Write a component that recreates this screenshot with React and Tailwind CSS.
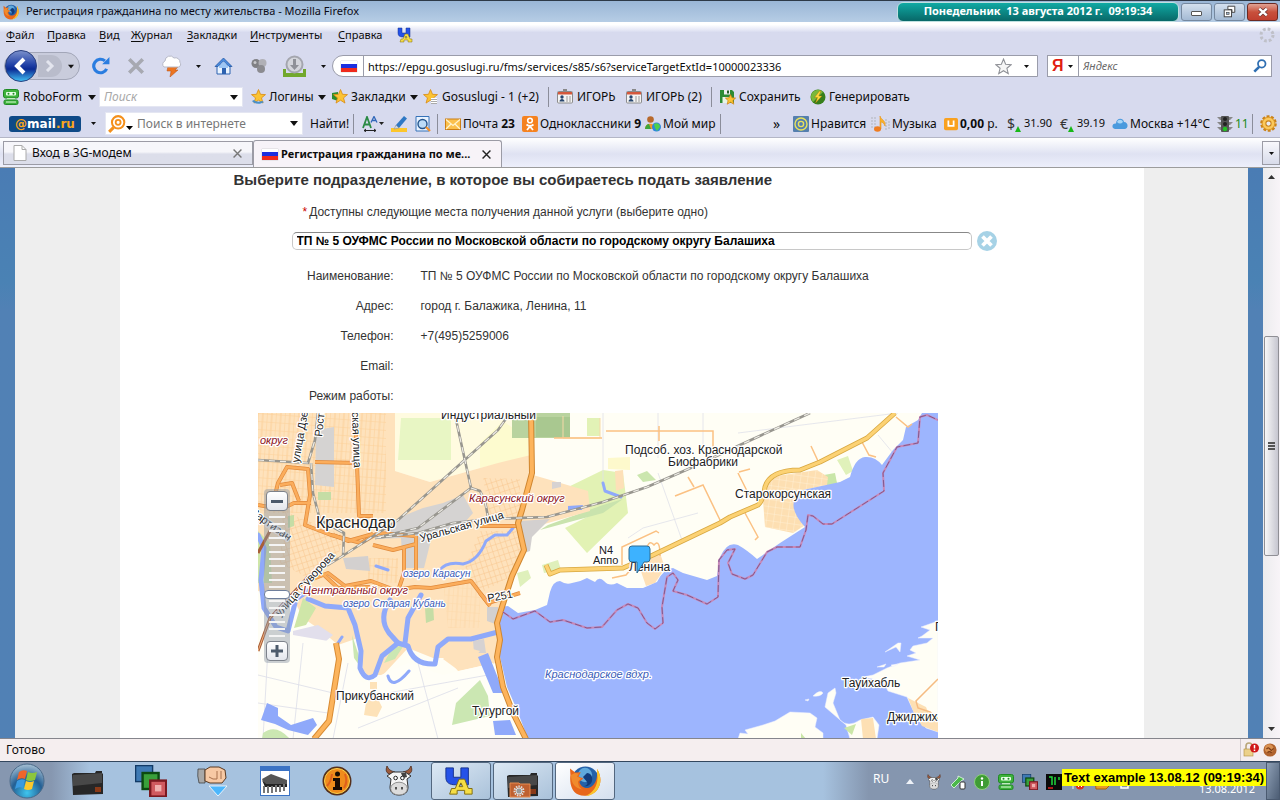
import React, { useState } from 'react';

const menuItems = [
  { key: 'Ф', rest: 'айл', width: 'w-[41px]' },
  { key: 'П', rest: 'равка', width: 'w-[52px]' },
  { key: 'В', rest: 'ид', width: 'w-8' },
  { key: 'Ж', rest: 'урнал', width: 'w-14' },
  { key: 'З', rest: 'акладки', width: 'w-[63px]' },
  { key: 'И', rest: 'нструменты', width: 'w-[88px]' },
  { key: 'С', rest: 'правка', width: 'w-[59px]' },
];

const details = [
  { label: 'Наименование:', value: 'ТП № 5 ОУФМС России по Московской области по городскому округу Балашиха' },
  { label: 'Адрес:', value: 'город г. Балажика, Ленина, 11' },
  { label: 'Телефон:', value: '+7(495)5259006' },
  { label: 'Email:', value: '' },
  { label: 'Режим работы:', value: '' },
];

function Svg({ size = 16, className = '', children }) {
  return (
    <svg width={size} height={size} viewBox="0 0 16 16" className={`shrink-0 ${className}`} aria-hidden="true">
      {children}
    </svg>
  );
}

function Caret({ className = '' }) {
  return (
    <svg width="8" height="5" viewBox="0 0 8 5" className={`shrink-0 ${className}`} aria-hidden="true">
      <path d="M0 0h8L4 5z" fill="#111" />
    </svg>
  );
}

function SmallCaret() {
  return (
    <svg width="5" height="3" viewBox="0 0 5 3" className="shrink-0" aria-hidden="true">
      <path d="M0 0h5L2.5 3z" fill="#111" />
    </svg>
  );
}

function FirefoxIcon({ size = 16 }) {
  return (
    <Svg size={size}>
      <circle cx="8.2" cy="7.6" r="6.8" fill="#2561a8" />
      <circle cx="8" cy="5" r="3.6" fill="#5fa9dc" />
      <path d="M9 4c2 0 3 2 2.500 4S9 11 7 10.500c2 0 2.500-1 2-2S7.500 7 7 6z" fill="#123c7c" />
      <path d="M14 2c2 3 2.400 7 .4 10S8 16.300 4.600 14.800.2 9 .7 5L.5 1.800l2.600 2 2.800-.2-1.200 2.200 2.500 1-2 1.600c.4 2 2.400 3.600 4.800 3 3-.8 4.500-4.500 4-9.400z" fill="#e8671b" />
      <path d="M14 2c2 3 2.400 7 .4 10-1.400 2.200-3.600 3.400-6 3.500 4.200-1.800 6.600-6 5.600-11.500z" fill="#fbc52d" />
      <path d="M1 5l2-1 2 .2-1 1.500 2 1-1.500 1.500c0 2 1 3.500 2.500 4C3 12 1 9 1 5z" fill="#f08b2c" />
    </Svg>
  );
}

function LetterLogo({ size = 16 }) {
  return (
    <Svg size={size}>
      <path d="M1 1h4v5h4V1h4v9H6C3 10 1 9 1 6z" fill="#2552e8" stroke="#15308c" strokeWidth=".5" />
      <path d="M8 7h3l2 5h2v3h-4v-2H7v2H3l1-3h2zm1 2l-1 2h2z" fill="#f6de45" stroke="#7d6a10" strokeWidth=".5" />
    </Svg>
  );
}

function RuFlag() {
  return (
    <span className="flex h-[11px] w-4 shrink-0 flex-col shadow-[0_0_1px_#999]">
      <span className="flex-1 bg-white" />
      <span className="flex-1 bg-[#1a2fe0]" />
      <span className="flex-1 bg-[#ee2a1c]" />
    </span>
  );
}

function RoboIcon({ size = 16 }) {
  return (
    <Svg size={size}>
      <rect x=".5" y=".5" width="15" height="8.5" rx="2" fill="#3fb23c" stroke="#1f8a24" />
      <rect x="3" y="3" width="10" height="3.5" rx="1" fill="#eaffea" />
      <circle cx="5.5" cy="4.8" r="1" fill="#1f8a24" />
      <circle cx="10.5" cy="4.8" r="1" fill="#1f8a24" />
      <rect x="4" y="9" width="8" height="2" fill="#bfeabf" />
      <rect x="1" y="11" width="14" height="4.5" rx="1.5" fill="#3fb23c" stroke="#1f8a24" />
      <path d="M3 13h10" stroke="#dfffdc" />
    </Svg>
  );
}

function StarIcon({ variant }) {
  return (
    <Svg>
      {variant === 'green' && <path d="M0 4l6-1v9l-6-2z" fill="#2c8b2c" />}
      <path d="M8.500.5l2 4.800 5 .3-4 3.300 1.500 5.200-4.500-2.900-4.500 2.900 1.500-5.200-4-3.300 5-.3z" fill="#fbc334" stroke="#d98a12" strokeWidth=".8" />
      {variant === 'login' && <path d="M2 12c2 3 8 4 12 1l-2-1c-3 1-6 1-8-1z" fill="#4a90c8" />}
      {variant === 'site' && (
        <g>
          <rect x="9" y="9" width="6" height="6" fill="#fff" />
          <path d="M9.500 10.500h5M9.500 12.500h5M9.500 14.500h5" stroke="#555" strokeDasharray="1 1" />
        </g>
      )}
    </Svg>
  );
}

function CardIcon() {
  return (
    <Svg>
      <rect x="6" y="0" width="4" height="3" fill="#888" />
      <rect x=".5" y="2.5" width="15" height="11.5" rx="1" fill="#f4f4f4" stroke="#8c8c8c" />
      <rect x="1" y="3" width="14" height="2.5" fill="#d4583c" />
      <circle cx="5" cy="8" r="1.7" fill="#27466e" />
      <path d="M2.500 12.500c0-3.500 5-3.500 5 0z" fill="#27466e" />
      <path d="M9 8h5M9 10h5M9 12h5" stroke="#999" strokeDasharray="2 1" />
    </Svg>
  );
}

function SaveIcon() {
  return (
    <Svg>
      <path d="M0 1h12l2 2v11H0z" fill="#2e8b34" />
      <rect x="4" y="1" width="6" height="4.5" fill="#eee" />
      <rect x="7" y="1.5" width="2" height="3" fill="#245c28" />
      <rect x="2.5" y="8" width="7" height="6" fill="#e8f4e6" />
      <path d="M10.500 5.500l1.500 3.300 3.600.3-2.700 2.400.9 3.700-3.300-2-3.300 2 .9-3.700-2.700-2.400 3.600-.3z" fill="#fbc334" stroke="#c97d10" strokeWidth=".7" />
    </Svg>
  );
}

function GenerateIcon() {
  return (
    <Svg>
      <circle cx="8" cy="8" r="7.5" fill="#377f1c" />
      <path d="M1 8a7 7 0 0 1 12-5L3 13A7 7 0 0 1 1 8z" fill="#79b83b" />
      <path d="M9.500 2L4.500 8.500h3L5.500 14l6.500-7H8.800L11 2z" fill="#ffd93b" stroke="#a36a00" strokeWidth=".4" />
    </Svg>
  );
}

function Separator() {
  return <span className="h-5 w-px shrink-0 bg-[#8b8d9a]" />;
}

function TitleBar() {
  return (
    <header className="flex h-[22px] shrink-0 items-center border-t border-[#2d3947] bg-linear-to-b from-[#9ab6d6] to-[#b6cde5] pl-[3px] text-[#0a0a14]">
      <FirefoxIcon />
      <h1 className="ml-[7px] flex-1 truncate text-[11px]">Регистрация гражданина по месту жительства - Mozilla Firefox</h1>
      <div className="mr-0.5 flex h-5 w-[282px] shrink-0 items-center justify-center rounded-md border border-[#bfe0e0] bg-linear-to-b from-[#10aaa4] to-[#086868] text-[11px] font-bold whitespace-pre text-white">
        Понедельник  13 августа 2012 г.  09:19:34
      </div>
      <div className="mr-0.5 flex shrink-0 gap-0.5">
        <button aria-label="Свернуть" className="flex h-[18px] w-[31px] items-center justify-center rounded-[3px] border border-[#75889f] bg-linear-to-b from-[#d4e0ee] to-[#a4bad4]">
          <span className="mt-1 h-[5px] w-[11px] rounded-[1px] border border-[#555] bg-white" />
        </button>
        <button aria-label="Восстановить" className="flex h-[18px] w-[31px] items-center justify-center rounded-[3px] border border-[#75889f] bg-linear-to-b from-[#d4e0ee] to-[#a4bad4]">
          <Svg size={13}>
            <path d="M6 1.500h8.500V9H11V5.500H6z" fill="#fff" stroke="#444" strokeWidth="1.2" />
            <rect x="1.5" y="6" width="9" height="8.5" fill="#fff" stroke="#444" strokeWidth="1.2" />
            <rect x="4.5" y="9" width="3" height="2.5" fill="#9fb5cf" stroke="#444" strokeWidth=".8" />
          </Svg>
        </button>
        <button aria-label="Закрыть" className="flex h-[18px] w-[31px] items-center justify-center rounded-[3px] border border-[#6b2a22] bg-linear-to-b from-[#e0a294] via-[#c8503c] to-[#c04030]">
          <Svg size={12}>
            <path d="M3 3.500l10 9M13 3.500l-10 9" stroke="#633" strokeWidth="5" />
            <path d="M3 3.500l10 9M13 3.500l-10 9" stroke="#fff" strokeWidth="3.2" />
          </Svg>
        </button>
      </div>
    </header>
  );
}

function MenuBar() {
  return (
    <nav className="flex h-[26px] shrink-0 items-center bg-linear-to-b from-white from-10% via-[#e6e8f6] via-30% to-[#d7daee] to-40% pl-1.5 text-[11px]">
      {menuItems.map(item => (
        <button key={item.rest} className={`shrink-0 text-left ${item.width}`}>
          <u className="underline-offset-2">{item.key}</u>{item.rest}
        </button>
      ))}
      <LetterLogo />
      <svg width="16" height="16" viewBox="0 0 16 16" className="mr-[5px] ml-auto" aria-hidden="true">
        <circle cx="8" cy="8" r="6" fill="none" stroke="#bfc0c8" strokeWidth="3" strokeDasharray="2.7 2" />
      </svg>
    </nav>
  );
}

function NavBar() {
  return (
    <div className="flex h-9 shrink-0 items-center pr-2 pl-1">
      <div className="flex h-7 w-[76px] shrink-0 items-center rounded-r-2xl rounded-l-2xl border border-[#a2a6b8] bg-[#c9ccdc]">
        <button aria-label="Назад" className="-ml-px shrink-0">
          <svg width="34" height="34" viewBox="0 0 34 34">
            <defs>
              <linearGradient id="back" x1="0" y1="0" x2="0" y2="1">
                <stop offset="0" stopColor="#7d92cc" />
                <stop offset=".45" stopColor="#2343a8" />
                <stop offset=".6" stopColor="#0b2a94" />
                <stop offset="1" stopColor="#42c3f5" />
              </linearGradient>
            </defs>
            <circle cx="17" cy="17" r="15.5" fill="url(#back)" stroke="#2a4080" />
            <path d="M20 10l-7 7 7 7" fill="none" stroke="#fff" strokeWidth="4" />
          </svg>
        </button>
        <button aria-label="Вперёд" className="flex h-[22px] w-6 shrink-0 items-center justify-center rounded-r-full bg-[#b9bccb]">
          <svg width="10" height="12" viewBox="0 0 10 12">
            <path d="M2 1l5 5-5 5" fill="none" stroke="#e3e5ee" strokeWidth="3" />
          </svg>
        </button>
        <button aria-label="История" className="ml-1.5"><Caret className="w-1.5" /></button>
      </div>
      <button aria-label="Обновить" className="ml-3 shrink-0">
        <Svg size={18}>
          <path d="M13 10.500A6 6 0 1 1 11.500 3.500" fill="none" stroke="#2a7de0" strokeWidth="2.8" />
          <path d="M9 6.500h6.500V0z" fill="#2a7de0" />
        </Svg>
      </button>
      <button aria-label="Остановить" className="ml-[17px] shrink-0">
        <Svg size={18}><path d="M2 2l12 12M14 2L2 14" stroke="#a7a9b1" strokeWidth="3.2" /></Svg>
      </button>
      <button aria-label="Погода" className="ml-4 shrink-0">
        <svg width="22" height="22" viewBox="0 0 22 22">
          <path d="M7 11h11l-4 4h3l-8 7 1-6H6z" fill="#ec7420" stroke="#b95110" strokeWidth=".5" />
          <path d="M3 12a3.500 3.500 0 0 1 1-6 5 5 0 0 1 9-3 4.500 4.500 0 0 1 6 4.500A3 3 0 0 1 18 12z" fill="#fff" stroke="#b8bac8" />
        </svg>
      </button>
      <span className="flex w-[31px] shrink-0 justify-center"><SmallCaret /></span>
      <button aria-label="Домой" className="shrink-0">
        <svg width="19" height="18" viewBox="0 0 19 18">
          <path d="M3 8h13v9H3z" fill="#eaf4ff" stroke="#2d62b0" />
          <path d="M9.500 1L1 9.500h3l5.500-5.500 5.500 5.500h3z" fill="#4a8de0" stroke="#2457a5" strokeWidth=".8" />
          <path d="M5 9l4.500-4.500L14 9v2H5z" fill="#9cc6f4" />
          <rect x="8" y="11" width="4" height="6" fill="#2d62b0" />
        </svg>
      </button>
      <button aria-label="Дополнения" className="ml-[18px] shrink-0">
        <Svg>
          <circle cx="5" cy="5.5" r="4.5" fill="#808084" />
          <circle cx="11.5" cy="5" r="4" fill="#b0b0b6" />
          <circle cx="10" cy="11" r="4" fill="#8b8b90" />
          <circle cx="4" cy="4.5" r="1.5" fill="#c8c8cc" />
        </Svg>
      </button>
      <button aria-label="Загрузки" className="ml-4 shrink-0">
        <svg width="23" height="23" viewBox="0 0 23 23">
          <path d="M0 14h23v8H0z" fill="#71a82c" />
          <path d="M3 13h17v5H3z" fill="#d7daee" />
          <circle cx="11.5" cy="9.5" r="8" fill="#d4d6dc" stroke="#a4a6ae" strokeWidth="2" />
          <path d="M10 4h3v6h3l-4.500 5L7 10h3z" fill="#8f9198" />
        </svg>
      </button>
      <span className="flex w-[26px] shrink-0 justify-center pl-2"><SmallCaret /></span>
      <div className="flex h-[22px] min-w-0 flex-1 items-center rounded-l-xl border border-[#9a9caa] bg-white pr-1 pl-2">
        <RuFlag />
        <label htmlFor="url" className="sr-only">Адрес</label>
        <input
          id="url"
          defaultValue="https://epgu.gosuslugi.ru/fms/services/s85/s6?serviceTargetExtId=10000023336"
          className="ml-1.5 h-full min-w-0 flex-1 border-l border-[#9a9caa] pl-1 text-[11px] outline-none"
        />
        <Svg size={17} className="mr-3">
          <path d="M8 1l2 4.900 5.200.4-4 3.400 1.300 5.100L8 12l-4.500 2.800 1.300-5.100-4-3.400L6 5.900z" fill="#f6f6f6" stroke="#8e9096" />
        </Svg>
        <SmallCaret />
        <span className="w-1" />
      </div>
      <form className="ml-[9px] flex h-[22px] w-[225px] shrink-0 items-center border border-[#9a9caa] bg-white pr-1">
        <button type="button" aria-label="Выбрать поиск" className="flex h-full w-[31px] shrink-0 items-center gap-1 border-r border-[#9a9caa] pl-1 font-['Liberation_Sans'] text-[16px] leading-5 font-bold text-[#e01d10]">
          Я<SmallCaret />
        </button>
        <input aria-label="Яндекс" placeholder="Яндекс" className="min-w-0 flex-1 pl-1 text-[11px] italic outline-none placeholder:text-[#6a6a6a]" />
        <Svg size={14}>
          <circle cx="10" cy="5.5" r="4.3" fill="none" stroke="#2f6fb2" strokeWidth="2" />
          <path d="M7 9L1.500 14.500" stroke="#2f6fb2" strokeWidth="3" />
        </Svg>
      </form>
    </div>
  );
}

function RoboBar() {
  return (
    <div className="flex h-[26px] shrink-0 items-center pl-[3px] text-[12px]">
      <button className="flex w-24 shrink-0 items-center gap-1"><RoboIcon />RoboForm<Caret className="ml-0.5" /></button>
      <div className="flex h-5 w-36 shrink-0 items-center border border-[#e4e6f2] bg-white pr-1 pl-1">
        <input aria-label="Поиск RoboForm" placeholder="Поиск" className="min-w-0 flex-1 text-[12px] italic outline-none placeholder:text-[#a8a8a8]" />
        <Caret />
      </div>
      <button className="ml-[7px] flex w-[82px] shrink-0 items-center gap-[3px]"><StarIcon variant="login" />Логины<Caret className="mr-1.5 ml-auto" /></button>
      <button className="flex w-[90px] shrink-0 items-center gap-[3px]"><StarIcon variant="green" />Закладки<Caret className="mr-1 ml-auto" /></button>
      <button className="flex w-[126px] shrink-0 items-center gap-1 whitespace-nowrap"><StarIcon variant="site" />Gosuslugi - 1 (+2)</button>
      <Separator />
      <button className="ml-2 flex w-[69px] shrink-0 items-center gap-1"><CardIcon />ИГОРЬ</button>
      <button className="flex w-[85px] shrink-0 items-center gap-1 whitespace-nowrap"><CardIcon />ИГОРЬ (2)</button>
      <Separator />
      <button className="ml-2 flex w-[90px] shrink-0 items-center gap-[3px]"><SaveIcon />Сохранить</button>
      <button className="flex shrink-0 items-center gap-[3px]"><GenerateIcon />Генерировать</button>
    </div>
  );
}

function Rate({ sign }) {
  return (
    <span className="flex items-end text-[14px] leading-4 text-[#333]">
      {sign}
      <svg width="6" height="6" viewBox="0 0 6 6" aria-hidden="true"><path d="M3 0l3 6H0z" fill="#18b818" /></svg>
    </span>
  );
}

function MailBar() {
  return (
    <div className="flex h-7 shrink-0 items-center border-b border-[#b4b6c6] pr-[3px] pl-[9px] text-[12px] whitespace-nowrap">
      <a href="#mail" className="flex h-4 w-[72px] shrink-0 items-center justify-center rounded-[3px] bg-[#0f4a87] font-['DejaVu_Sans'] text-[12px] leading-4 font-bold text-white">
        <span className="text-[#f9a61c]">@</span>mail<span className="text-[#f9a61c]">.ru</span>
      </a>
      <span className="flex w-6 shrink-0 justify-center"><SmallCaret /></span>
      <div className="flex h-[23px] w-[198px] shrink-0 items-center gap-1 border border-[#e4e6f2] bg-white pr-1 pl-0.5">
        <Svg size={18}>
          <circle cx="9" cy="6.5" r="5.5" fill="none" stroke="#f4901c" strokeWidth="1.8" />
          <circle cx="9" cy="6.5" r="2.2" fill="none" stroke="#f4901c" strokeWidth="1.6" />
          <path d="M5 11l-4 4" stroke="#f4901c" strokeWidth="2.6" />
        </Svg>
        <span className="-ml-1 self-end pb-1"><svg width="7" height="4" viewBox="0 0 7 4"><path d="M0 0h7L3.500 4z" /></svg></span>
        <input aria-label="Поиск в интернете" placeholder="Поиск в интернете" className="min-w-0 flex-1 text-[12px] outline-none placeholder:text-[#777]" />
        <Caret />
      </div>
      <button className="w-[50px] shrink-0 pl-[7px] text-left">Найти!</button>
      <Separator />
      <button aria-label="Размер шрифта" className="w-[37px] shrink-0 pl-2">
        <svg width="22" height="16" viewBox="0 0 22 16">
          <path d="M1 12L5 1l4 11M2.500 8.500h5" fill="none" stroke="#2a8a44" strokeWidth="1.8" />
          <path d="M9 6.500L12 .5l3 6M10 4.500h4" fill="none" stroke="#2f66b8" strokeWidth="1.3" />
          <path d="M2 14.500h12M4 13l-2 1.500L4 16M12 13l2 1.500-2 1.500" stroke="#222" fill="none" />
          <path d="M17 6h5l-2.500 3z" fill="#222" />
        </svg>
      </button>
      <button aria-label="Подсветить" className="w-6 shrink-0">
        <Svg>
          <path d="M0 12h16v4H0z" fill="#fcc62c" />
          <path d="M13 0l3 2.500-8 9.500H4l1-3z" fill="#2f78c4" />
          <path d="M5 9l3 3-5 1z" fill="#cfd8e4" stroke="#888" strokeWidth=".5" />
        </Svg>
      </button>
      <button aria-label="Просмотр" className="w-[22px] shrink-0">
        <Svg>
          <path d="M1 .5h13v14.500H1z" fill="#e8f2ff" stroke="#3672b8" />
          <circle cx="7.5" cy="8" r="4.5" fill="#bcdcf8" stroke="#24548c" strokeWidth="1.4" />
          <path d="M11 11l4 4" stroke="#f0902c" strokeWidth="2.2" />
        </Svg>
      </button>
      <Separator />
      <button className="ml-[7px] flex w-[77px] shrink-0 items-center gap-0.5">
        <Svg>
          <rect x=".5" y="3" width="15" height="10.5" fill="#fbc04c" stroke="#cc7e14" />
          <path d="M1 3.500l7 6 7-6M1 13l5-5M15 13l-5-5" fill="none" stroke="#fff4cf" strokeWidth="1.2" />
        </Svg>
        <span>Почта <b>23</b></span>
      </button>
      <button className="flex w-[123px] shrink-0 items-center gap-0.5">
        <Svg>
          <rect width="16" height="16" rx="2" fill="#f58220" />
          <circle cx="8" cy="4.5" r="2.3" fill="none" stroke="#fff" strokeWidth="1.6" />
          <path d="M4.500 8.500c2 1.600 5 1.600 7 0M5 14l3-3.500 3 3.500" fill="none" stroke="#fff" strokeWidth="1.8" />
        </Svg>
        <span>Одноклассники <b>9</b></span>
      </button>
      <button className="flex w-[75px] shrink-0 items-center gap-0.5">
        <Svg>
          <circle cx="5.5" cy="3.5" r="3.3" fill="#b8692c" />
          <path d="M0 13c0-7 10-7 11 0z" fill="#f4952a" />
          <path d="M0 13c0-3 2-5 4-5l2 5z" fill="#3fa63c" />
          <circle cx="11.5" cy="11" r="4.5" fill="#2e88dc" />
          <path d="M9 8c3-2 6 0 6 3l-3 4-2-3z" fill="#4fd04c" />
        </Svg>
        Мой мир
      </button>
      <Separator />
      <div className="ml-auto flex shrink-0 items-center">
        <button aria-label="Ещё" className="w-5 text-left text-[14px] leading-4">»</button>
        <button className="flex w-[78px] items-center gap-0.5">
          <Svg>
            <rect width="16" height="16" rx="1" fill="#557fae" />
            <circle cx="8" cy="8" r="6" fill="none" stroke="#e8e25c" strokeWidth="1.4" />
            <circle cx="8" cy="8" r="2.6" fill="none" stroke="#e8e25c" strokeWidth="1.4" />
          </Svg>
          Нравится
        </button>
        <button className="flex w-[73px] items-center gap-0.5">
          <svg width="19" height="16" viewBox="0 0 19 16" className="shrink-0">
            <path d="M1 1v11M4 1v11M15 3v11M18 5v9" stroke="#c4c7d4" strokeWidth="2" strokeDasharray="2 1" />
            <path d="M9 13V0c1 4 6 4 5 10-1-3-3-4-4-4v7z" fill="#f9b22c" stroke="#e8951c" strokeWidth=".6" />
            <ellipse cx="6.5" cy="13" rx="3.5" ry="2.7" fill="#ef7c20" />
          </svg>
          Музыка
        </button>
        <button className="flex w-[63px] items-center gap-0.5">
          <Svg size={14}>
            <rect y="1" width="16" height="14" rx="2" fill="#f9a11f" />
            <path d="M5 4v6h6V4" fill="none" stroke="#fff" strokeWidth="2" />
          </Svg>
          <span><b>0,00</b> р.</span>
        </button>
        <span className="flex w-[53px] items-center gap-[3px] text-[11px]"><Rate sign="$" />31.90</span>
        <span className="flex w-[52px] items-center gap-[3px] text-[11px]"><Rate sign="€" />39.19</span>
        <span className="flex w-[105px] items-center gap-0.5">
          <Svg>
            <path d="M3 13c-4-1-3-6 1-5.500C4 2 11 1 12 6c4 0 5 6 1 7z" fill="#4a9ade" />
            <path d="M5 6c1-3 5-3 6 0-2 2-4 2-6 0z" fill="#a8d6f8" />
          </Svg>
          Москва +14°C
        </span>
        <span className="flex w-[35px] items-center gap-0.5 text-[#178a17]">
          <Svg>
            <path d="M0 1h16l-3 3H3zM0 6h16l-3 3H3zM0 11h16l-3 3H3z" fill="#888" />
            <rect x="4" y="0" width="8" height="16" rx="1" fill="#555" />
            <circle cx="8" cy="3" r="2" fill="#222" />
            <circle cx="8" cy="8" r="2" fill="#222" />
            <circle cx="8" cy="13" r="2.2" fill="#22c322" />
          </Svg>
          11
        </span>
        <Separator />
        <button aria-label="Настройки" className="ml-[7px]">
          <Svg size={17}>
            <circle cx="8" cy="8" r="6.5" fill="#f8b840" stroke="#c9821a" strokeWidth="2.6" strokeDasharray="2.6 1.5" />
            <circle cx="8" cy="8" r="5.8" fill="#fbc95c" stroke="#d9942a" strokeWidth=".7" />
            <circle cx="8" cy="8" r="2.5" fill="#e8ebf4" stroke="#c9821a" />
          </Svg>
        </button>
      </div>
    </div>
  );
}

function TabStrip() {
  return (
    <div className="flex h-[30px] shrink-0 items-end border-b border-[#9c9c9c] bg-linear-to-b from-white via-[#dfe2f2] via-55% to-[#edeffb] pl-[3px] text-[12px]">
      <div className="mb-0.5 flex h-6 w-[250px] items-center border border-[#9b9ba5] bg-linear-to-b from-[#f6f6fa] from-45% to-[#dcdeea] to-55% pr-2.5 pl-2">
        <Svg><path d="M2 .5h8l4 4v11H2z" fill="#fff" stroke="#aaa" /><path d="M10 .5v4h4" fill="none" stroke="#aaa" /></Svg>
        <span className="ml-1 flex-1">Вход в 3G-модем</span>
        <button aria-label="Закрыть вкладку">
          <Svg size={9}><path d="M1 1l14 14M15 1L1 15" stroke="#777" strokeWidth="2.5" /></Svg>
        </button>
      </div>
      <div className="flex h-[27px] w-[249px] items-center rounded-t-[3px] border border-b-0 border-[#9b9ba5] bg-[#f7f3f8] pr-2.5 pl-2 text-[11px] font-bold">
        <RuFlag />
        <span className="ml-[3px] flex-1 whitespace-nowrap">Регистрация гражданина по ме...</span>
        <button aria-label="Закрыть вкладку">
          <Svg size={9}><path d="M1 1l14 14M15 1L1 15" stroke="#222" strokeWidth="2.5" /></Svg>
        </button>
      </div>
      <button aria-label="Список вкладок" className="mb-0.5 ml-auto flex h-6 w-[18px] items-center justify-center border border-[#9b9ba5] bg-linear-to-b from-[#f8f8fc] to-[#d8dbea]">
        <SmallCaret />
      </button>
    </div>
  );
}

const railLines = [
  'M252 0L240 17L140 107L83 144L50 164',
  'M197 2L213 75L160 115L117 125',
  'M213 75L222 78L227 88L230 104',
  'M117 125L160 120L195 110L232 106L289 104L345 89L389 74L435 54L482 32L552 0',
  'M0 47L50 50L57 27L60 0',
  'M53 50L55 80L62 107L86 120L85 144',
];

const orangeRoads = [
  'M57 49L100 50M97 0L101 103L115 103',
  'M17 82L20 70L29 54L50 56L52 82L47 112L73 122L103 130L120 120L145 122L157 123',
  'M0 92L17 95L30 93L36 90L53 90',
  'M22 72L34 70L41 88',
  'M115 132L135 137L158 131L158 123M146 133L146 162L158 158L158 131',
  'M75 122L90 128L115 121',
  'M45 170L70 160L87 173L113 168L137 177L157 174L173 175L213 168L232 193',
  'M66 162L80 175L112 174M146 160L140 178',
  'M222 180L230 190L262 180',
  'M222 113L262 113',
];

const cityShape = 'M0 0H137V58L172 69L240 50L273 42L275 62L330 78L332 98L262 118L266 137L254 163L244 194L238 250L200 258L190 245L175 245L150 235L125 262L108 262L100 225L80 232L64 218L45 205L35 185L0 178z';
const mainRoad = 'M273 0L274 60L264 97L260 110L266 137L254 163L244 194L239 210L242 227L239 244L245 274L255 300L268 326';
const shoreRoad = 'M288 152L292 161L302 157L365 155L395 142L462 110L472 104L500 92Q505 88 507 74Q512 57 542 57L562 49L609 25L637 0';
const southRoad = 'M78 230L81 246L71 308L56 326';
const village = 'M512 64L559 57L570 64L569 72L545 77L537 94L547 112L535 120L507 114L505 87z';
const border = 'M245 199L255 206L277 198L292 209L305 207L329 215L344 214L359 197L370 191L380 195L389 210L397 216L405 210L404 194L409 164L415 160L420 167L415 178L429 182L449 191L460 184L461 147L469 137L477 136L470 150L474 161L487 166L495 162L509 139L519 134L542 134L548 117L550 102L555 103L565 111L574 111L626 78L625 60L639 34L660 30L662 4L669 2L680 7';

function CityMap() {
  return (
    <svg width="680" height="326" viewBox="0 0 680 326" className="block" role="img" aria-label="Карта: Ленина" fontFamily="Liberation Sans, sans-serif">
      <defs>
        <pattern id="streets" width="9" height="8" patternUnits="userSpaceOnUse" patternTransform="rotate(4)">
          <path d="M0 0H9M0 0V8M5 0V8" stroke="#fbcf98" fill="none" />
        </pattern>
        <pattern id="dense" width="5" height="6" patternUnits="userSpaceOnUse" patternTransform="rotate(-18)">
          <path d="M0 0H5M0 0V6" stroke="#f7c58e" fill="none" />
        </pattern>
        <pattern id="village" width="7" height="7" patternUnits="userSpaceOnUse" patternTransform="rotate(8)">
          <path d="M0 0H7M0 0V7" stroke="#fff0d4" fill="none" />
        </pattern>
      </defs>
      <rect width="680" height="326" fill="#fffef5" />

      {/* fields */}
      <path d="M137 0H273V45L240 50L172 69L137 58z" fill="#fffbe0" />
      <path d="M222 30L245 8L270 26V44L222 55z" fill="#fdfbcf" />
      <path d="M143 5H193V47H140z" fill="#e8f6c4" />
      <path d="M254 0H312V25H254z" fill="#b9d39f" />
      <path d="M278 4H312V24H278z" fill="#a9c890" />
      <path d="M312 4H328V24H312z" fill="#fffef5" />
      <path d="M329 5H342V23H329z" fill="#e2f2b6" />
      <path d="M304 77L345 57L365 60L370 100L329 140L307 115L345 96L298 105z" fill="#e2f2b4" />
      <path d="M290 112L345 92L365 86L345 100L282 117z" fill="#c9e3ad" />
      <path d="M379 62L389 58L398 67L385 69z" fill="#cbe6ae" />
      <path d="M350 45L372 44L372 57L350 56z" fill="#fdf9cc" />
      <path d="M259 160L270 157L273 165L262 174zM284 152L300 147L303 157L286 160z" fill="#dff0bb" />
      <path d="M579 47L590 43L595 58L588 62z" fill="#e0f1ba" />
      <path d="M566 62L577 60L579 70L569 76z" fill="#c9e6a8" />
      <path d="M305 3V25H342V5" fill="none" stroke="#f7d9a8" />
      <path d="M345 0V70M400 60L425 130M440 100L385 115L370 125M445 0V40M480 20L640 0M620 22L635 40M400 0V45" fill="none" stroke="#dfe1ea" strokeWidth=".8" />

      {/* city blocks */}
      <path d={cityShape} fill="#fee2bc" />
      <path d="M0 0H128V100H0z" fill="url(#streets)" />
      <path d="M25 98L85 122L80 145L50 165L22 150z" fill="url(#dense)" />
      <path d="M110 145L140 145V170L110 168z" fill="url(#streets)" />
      <path d="M225 65L262 66L262 105L232 106zM222 118L258 118L263 137L250 165L222 180L205 160z" fill="url(#dense)" />
      <path d="M185 170L222 170L222 215L190 215z" fill="url(#streets)" opacity=".5" />
      <path d="M58 17L76 14L76 74L57 72zM140 105L165 95L185 90L205 82L215 100L200 117L173 127L166 155L145 155L143 125L120 126z" fill="#d5d3d2" />
      <path d="M262 108L292 106L274 124L272 138L266 140zM85 145L110 143L112 158L88 156zM229 194L240 194L240 212L229 208z" fill="#d3d0cf" />
      <path d="M294 69L303 69L303 74L294 76zM215 228L226 226L228 240L216 240z" fill="#d6d2d2" />
      <path d="M35 218L60 212L75 222L60 235L35 228z" fill="#e2dfec" />
      <path d="M0 118L12 130L14 170L0 170zM45 185L58 195L48 212L36 215z" fill="#cfe6a8" />
      <path d="M167 195L175 190L176 207L168 210zM60 79H73V87H60zM30 103L36 102V113L30 115z" fill="#c5dda5" />
      <path d="M0 235L35 222L70 228L105 270L150 250L185 262L235 250V326H0z" fill="#fffef7" />
      <path d="M94 222L100 240L104 256L96 245zM126 250L134 235L146 232L137 246z" fill="#cbe7b2" />
      <path d="M101 215L125 215L127 240L113 262L105 258z" fill="#fee2bc" />
      <path d="M185 246L200 257L208 255L222 238L200 232z" fill="#fee2bc" />
      <path d="M112 269H119V276H112zM108 290L117 280L124 294L119 304L106 302z" fill="#fde2b8" />
      <path d="M0 262L75 280M10 235L5 326M90 250L75 326M160 250L180 326M130 280L230 262M0 290L70 300M100 315L200 275M45 230L35 326" fill="none" stroke="#dcdde8" strokeWidth=".8" />

      {/* villages */}
      <path d={village} fill="#fddfb2" />
      <path d={village} fill="url(#village)" />
      <path d="M380 150L402 140L407 155L397 170L388 173z" fill="#fee0b6" />
      <path d="M357 58L365 57L366 75L358 78z" fill="#fde0b8" />

      {/* water */}
      <path d="M242 194L250 193L260 200L277 197L289 192L292 179Q295 168 302 168Q308 172 314 170Q322 169 329 165L337 169Q341 163 346 168Q351 174 359 170L369 175L385 175L399 169Q405 156 415 155L425 160L449 167L459 163L462 144Q469 128 480 132Q489 137 499 146L522 130L547 114Q525 90 545 77L582 69L592 64Q597 45 607 44Q617 43 624 52L635 37L645 27L648 14L660 7L664 0H680V326H270L259 297L249 274L242 244z" fill="#9db5fe" />
      <g fill="none" stroke="#8fa9fa" strokeLinejoin="round" strokeLinecap="round">
        <path d="M0 122L6 135L3 167L6 195L18 214L30 218L35 198L38 186L50 178" strokeWidth="5" />
        <path d="M50 186L67 193L90 195L97 212L103 238L102 255Q108 270 117 262L124 243L140 230L150 233Q155 252 177 251L180 234L190 226L213 226L240 219" strokeWidth="5" />
        <path d="M132 187Q120 205 131 220L140 230M163 182L150 205L147 230" strokeWidth="5" />
        <path d="M181 158Q188 148 205 151Q220 148 228 128L237 122L249 122L255 115" strokeWidth="3" />
        <path d="M118 153L130 157M130 263Q134 278 151 258M345 70L347 78L363 84M80 230L84 224" strokeWidth="3" />
      </g>
      <path d="M9 290L20 295L20 303L33 312L55 305L59 312L50 322L30 317L17 311L3 307zM220 244L230 240L246 280L235 280zM235 308L252 307L258 322L237 322zM310 93L325 92L324 97L310 97z" fill="#8fa9fa" />
      <path d="M194 312L198 290L222 267L230 283L232 303zM5 320Q18 310 32 326H4z" fill="#cbe7b2" />

      {/* islands and south shore */}
      <g fill="#fffef5" stroke="#eef1ff" strokeWidth=".5">
        <path d="M680 208L663 214L672 217L664 223L660 225L675 225L669 230L655 233L652 237L658 240L649 243L662 247L642 250L629 255L615 262L605 264L625 268L630 278L649 284L655 297L659 305L668 315L680 319z" />
        <path d="M480 326L482 320L490 321L487 317L505 312L517 308L532 299L552 300L559 305L557 314L565 320V326z" />
        <path d="M567 294L570 280L577 275L578 280L575 290L582 307Q590 315 602 307L615 304L621 312L619 326H592L588 312z" />
        <path d="M627 239L640 230L643 230L642 239L638 234zM555 283Q562 276 565 280Q562 284 555 283zM619 254L628 251L626 254zM633 252L640 251L635 254zM547 287L551 286L550 288z" />
      </g>
      <path d="M603 306L615 305L618 326H605zM650 285L668 294L672 304L680 308V319L664 313L656 300z" fill="#fde0b4" />
      <path d="M586 315L598 311L594 322zM543 320L548 326H543z" fill="#cbe7a8" />
      <path d="M680 266L658 288L660 295L672 299L680 306" fill="none" stroke="#f5bb82" strokeWidth="1.5" />

      {/* roads */}
      <g fill="none" stroke="#fbc183" strokeWidth="1.5">
        <path d="M348 18H455V35M401 13V28M417 83L445 72L462 107M430 64L436 74M480 60L492 84M481 59L492 56M553 33L560 48M487 100L500 124L497 127M604 29L611 42L618 44M638 4L650 14L654 11" />
        <path d="M364 152L364 134L398 118L401 120M388 140Q390 125 396 132Q402 125 402 143M354 165L368 162L374 155M296 25H344" />
      </g>
      <g fill="none" strokeLinejoin="round">
        {orangeRoads.map(d => <path key={d} d={d} stroke="#e08a3c" strokeWidth="4" />)}
        {orangeRoads.map(d => <path key={d} d={d} stroke="#fbad5c" strokeWidth="2.6" />)}
        <path d="M0 238L12 205L50 164M0 140L12 118" stroke="#a85f38" strokeWidth="3" />
        <path d="M0 238L12 205L50 164" stroke="#f0b080" strokeWidth="1" />
        <path d={southRoad} stroke="#d98c34" strokeWidth="6" />
        <path d={southRoad} stroke="#fcb45c" strokeWidth="4" />
        <path d={shoreRoad} stroke="#d8a840" strokeWidth="5" />
        <path d={shoreRoad} stroke="#fcd274" strokeWidth="3.4" />
        <path d={mainRoad} stroke="#cf8630" strokeWidth="6" />
        <path d={mainRoad} stroke="#fdb45c" strokeWidth="4" />
        {railLines.map(d => <path key={d} d={d} stroke="#98968f" strokeWidth="2.6" />)}
        {railLines.map(d => <path key={d} d={d} stroke="#eeece6" strokeWidth="1.2" strokeDasharray="6 5" />)}
        <path d={border} stroke="#c889b8" strokeWidth="2" />
        <path d={border} stroke="#805a90" strokeWidth="1" strokeDasharray="7 3" />
      </g>

      {/* labels */}
      <g fontSize="12" fill="#222" stroke="#fff" strokeWidth="2.5" strokeLinejoin="round" paintOrder="stroke">
        <text x="183" y="6">Индустриальный</text>
        <text x="58" y="115" fontSize="16">Краснодар</text>
        <text x="78" y="287">Прикубанский</text>
        <text x="214" y="302">Тугургой</text>
        <text x="367" y="41">Подсоб. хоз. Краснодарской</text>
        <text x="410" y="53">Биофабрики</text>
        <text x="477" y="85">Старокорсунская</text>
        <text x="371" y="158">Ленина</text>
        <text x="341" y="141" fontSize="11">N4</text>
        <text x="335" y="151" fontSize="11">Аппо</text>
        <text x="584" y="274">Тауйхабль</text>
        <text x="629" y="308">Джиджих</text>
        <text x="677" y="218">Г</text>
        <g fontSize="11">
          <text transform="translate(230 189) rotate(-10)">Р251</text>
          <text transform="translate(163 129) rotate(-16)">Уральская улица</text>
          <text transform="translate(41 50) rotate(-80)">улица Дзержинского</text>
          <text transform="translate(64 24) rotate(-84)">Ростовское</text>
          <text transform="translate(94 -1) rotate(88)">ская улица</text>
          <text transform="translate(22 204) rotate(-48)">улица Суворова</text>
          <text transform="translate(-9 100) rotate(36)">Партизан</text>
        </g>
        <g fontSize="11" fontStyle="italic" fill="#8c1020">
          <text x="2" y="31">округ</text>
          <text x="211" y="89">Карасунский округ</text>
          <text x="45" y="181">Центральный округ</text>
        </g>
        <g fontSize="10" fontStyle="italic" fill="#3a5cb8">
          <text x="145" y="164">озеро Карасун</text>
          <text x="85" y="194">озеро Старая Кубань</text>
          <text x="287" y="265" fontSize="11">Краснодарское вдхр.</text>
        </g>
      </g>

      {/* office marker */}
      <path d="M374 133H389Q392 133 392 136V146Q392 149 389 149H386L379 160V149H374Q371 149 371 146V136Q371 133 374 133z" fill="#3db2ff" stroke="#2f6c94" />
    </svg>
  );
}

function ZoomControl() {
  const [zoom, setZoom] = useState(65);
  const buttonClass = 'flex h-5 w-[22px] items-center justify-center rounded-[4px] border border-[#7d828b] bg-linear-to-b from-white to-[#e3e6ec]';

  return (
    <div className="absolute top-[76px] left-1.5 flex w-[26px] flex-col items-center rounded-[4px] bg-[#8c96a5]/45 py-0.5">
      <button aria-label="Отдалить" className={buttonClass} onClick={() => setZoom(Math.max(0, zoom - 7))}>
        <span className="h-[3px] w-3 bg-[#4c5a6b]" />
      </button>
      <input
        type="range"
        aria-label="Масштаб"
        value={zoom}
        onChange={e => setZoom(Number(e.target.value))}
        className="h-[130px] w-[26px] appearance-none bg-[repeating-linear-gradient(to_bottom,transparent_0px,transparent_5px,#f4f4f4_5px,#f4f4f4_7px)] bg-size-[16px_100%] bg-center bg-no-repeat [writing-mode:vertical-lr] [&::-webkit-slider-thumb]:h-[9px] [&::-webkit-slider-thumb]:w-[26px] [&::-webkit-slider-thumb]:appearance-none [&::-webkit-slider-thumb]:rounded-[4px] [&::-webkit-slider-thumb]:border [&::-webkit-slider-thumb]:border-[#6f7f9c] [&::-webkit-slider-thumb]:bg-white"
      />
      <button aria-label="Приблизить" className={buttonClass} onClick={() => setZoom(Math.min(100, zoom + 7))}>
        <svg width="12" height="12" viewBox="0 0 12 12"><path d="M0 6h12M6 0v12" stroke="#4c5a6b" strokeWidth="3" /></svg>
      </button>
    </div>
  );
}

function ServicePage() {
  return (
    <main className="w-full max-w-[1024px] shrink bg-white font-['Liberation_Sans',sans-serif] text-[12px] text-[#333]">
      <h2 className="ml-[114px] h-6 text-[15px] leading-6 font-bold whitespace-nowrap">Выберите подразделение, в которое вы собираетесь подать заявление</h2>
      <label htmlFor="office" className="mt-2 ml-[183px] flex h-6 gap-0.5 leading-6">
        <span className="text-[#c00]">*</span>
        <span>Доступны следующие места получения данной услуги (выберите одно)</span>
      </label>
      <div className="mt-[7px] ml-[172px] flex h-5 items-center">
        <input
          id="office"
          defaultValue="ТП № 5 ОУФМС России по Московской области по городскому округу Балашиха"
          className="h-[18px] w-[680px] rounded-[5px] border border-[#c8c8c8] border-t-[#888] bg-white pl-1 text-[12px] font-bold text-black outline-none"
        />
        <button aria-label="Очистить" className="ml-[5px] flex h-5 w-5 shrink-0 items-center justify-center rounded-full bg-[#a6d2e6]">
          <Svg size={12}><path d="M2 2l12 12M14 2L2 14" stroke="#fff" strokeWidth="5" /></Svg>
        </button>
      </div>
      <dl className="mt-2.5">
        {details.map(row => (
          <div key={row.label} className="flex h-[30px] leading-[30px]">
            <dt className="w-[274px] shrink-0 text-right">{row.label}</dt>
            <dd className="ml-[27px] whitespace-nowrap">{row.value}</dd>
          </div>
        ))}
      </dl>
      <div className="relative mt-0.5 ml-[138px] w-[680px] overflow-hidden">
        <CityMap />
        <ZoomControl />
      </div>
    </main>
  );
}

function Scrollbar() {
  return (
    <div className="flex w-[17px] shrink-0 flex-col items-center bg-linear-to-r from-[#ececee] to-[#f8f4f8] py-[7px]" aria-hidden="true">
      <svg width="7" height="4" viewBox="0 0 7 4"><path d="M3.500 0L7 4H0z" fill="#333" /></svg>
      <div className="mt-[157px] flex h-[220px] w-[15px] flex-col items-center justify-center gap-px rounded-[2px] border border-[#8f8f95] bg-linear-to-r from-[#f8f8f8] to-[#c6c6d0]">
        <span className="h-0.5 w-[7px] bg-[#555]" />
        <span className="h-0.5 w-[7px] bg-[#555]" />
        <span className="h-0.5 w-[7px] bg-[#555]" />
      </div>
      <svg width="7" height="4" viewBox="0 0 7 4" className="mt-auto"><path d="M3.500 4L7 0H0z" fill="#333" /></svg>
    </div>
  );
}

function StatusBar() {
  return (
    <footer className="flex h-[23px] shrink-0 items-center border-t border-[#85858c] bg-[#f5eeef] pr-[3px] pl-1.5 text-[12px]">
      <span className="flex-1">Готово</span>
      <span className="flex h-full items-center gap-1 border-l border-[#d0c8ca] pl-0.5">
        <Svg>
          <path d="M3 8V4a3 3 0 0 1 6 0v4" fill="none" stroke="#b9a678" strokeWidth="1.6" />
          <rect x="1" y="7" width="9" height="7" fill="#ecd18a" stroke="#b08c3c" strokeWidth=".6" />
          <circle cx="11.5" cy="6" r="4.5" fill="#d01818" />
          <path d="M11.500 3v3.500M11.500 7.500v1.500" stroke="#fff" strokeWidth="1.5" />
        </Svg>
        <Svg size={14}>
          <circle cx="8" cy="8" r="7.5" fill="#b0622c" />
          <circle cx="7" cy="6.5" r="5" fill="#d99050" />
          <path d="M4 7q2-3 4 0t4-1M5 11q2-2 5 0" fill="none" stroke="#7c3c14" strokeWidth="1.5" />
        </Svg>
      </span>
    </footer>
  );
}

function Squares({ size = 32 }) {
  return (
    <Svg size={size}>
      <rect x=".3" y=".3" width="8.5" height="8" fill="#3f7ab4" stroke="#123a66" strokeWidth=".7" />
      <rect x="3.8" y="4" width="8" height="8" fill="#3aa03a" stroke="#0c4a10" strokeWidth="1.2" />
      <rect x="7.6" y="7.8" width="8" height="8" fill="#d05a60" stroke="#7a1820" strokeWidth="1.2" />
      <rect x="10" y="10" width="3.2" height="3.2" fill="#f0b0b0" />
    </Svg>
  );
}

function Cow({ size = 32 }) {
  return (
    <Svg size={size}>
      <path d="M4 4.500C1.500 4.500 1.200 2.500 2 .5 3 2.500 4 3 6 3.500M12 4.500c2.500 0 2.800-2 2-4-1 2-2 2.500-4 3" fill="#9c5a3c" stroke="#4a2818" strokeWidth=".4" />
      <path d="M5 3.500h6l3 2-2 1.500.5 4c0 3-2 4-4.500 4s-4.500-1-4.500-4l.5-4-2-1.500z" fill="#f6f6f6" stroke="#333" strokeWidth=".5" />
      <path d="M9 4h2.500l.5 2-2 .5z" fill="#444" />
      <circle cx="6.3" cy="6.5" r=".9" fill="#fff" stroke="#222" strokeWidth=".5" />
      <circle cx="9.7" cy="6.5" r=".9" fill="#fff" stroke="#222" strokeWidth=".5" />
      <ellipse cx="8" cy="11.8" rx="4.2" ry="3.2" fill="#dcdcdc" stroke="#777" strokeWidth=".4" />
      <path d="M6.500 11v1.200M9.500 11v1.200" stroke="#333" strokeWidth=".8" />
    </Svg>
  );
}

function Folder({ gear = false }) {
  return (
    <svg width="32" height="26" viewBox="0 0 32 26" aria-hidden="true">
      <path d="M0 4L2 3H23L24 1H30V3L31 4V24L1 25z" fill="#272727" />
      <path d="M1 5L30 3V13L1 16z" fill="#484848" />
      <path d="M23 17h6v5h-6z" fill="#8a3a18" />
      {gear && (
        <g>
          <path d="M3 11h9l1 1h10v13H3z" fill="#bf6030" stroke="#e88c50" />
          <circle cx="12" cy="19" r="4.5" fill="none" stroke="#ddd" strokeWidth="2" strokeDasharray="1.5 1" />
          <circle cx="12" cy="19" r="3" fill="#999" stroke="#ddd" />
        </g>
      )}
    </svg>
  );
}

function TrayIcons() {
  return (
    <div className="flex items-center gap-2 pt-0.5">
      <Cow size={16} />
      <Svg>
        <path d="M1 11L8 4V2l6 3-3 2-7 7z" fill="#4cb84c" stroke="#e8ffe8" strokeWidth=".8" />
        <rect x="10" y="8" width="5" height="7" rx="1" fill="#fff" stroke="#333" />
      </Svg>
      <Svg>
        <circle cx="8" cy="8" r="7.5" fill="#3f9c34" stroke="#8cd07c" />
        <circle cx="8" cy="4.5" r="1.2" fill="#fff" />
        <path d="M8 7v5" stroke="#fff" strokeWidth="2" />
      </Svg>
      <RoboIcon size={16} />
      <Squares size={16} />
      <Svg>
        <rect width="16" height="16" fill="#0a0a0a" />
        <path d="M3 3h3v8M9 3v8M13 3v3" stroke="#1fd83c" strokeWidth="1.5" fill="none" />
        <path d="M2 14h5" stroke="#e02020" strokeWidth="1.5" />
      </Svg>
      <Svg>
        <path d="M3 2v13" stroke="#eee" />
        <circle cx="10" cy="11" r="4.5" fill="#d83020" />
        <path d="M8 9l4 4M12 9l-4 4" stroke="#fff" />
      </Svg>
      <Svg><path d="M1 5h14v7l-3 3H2z" fill="#e89a28" stroke="#a8640c" /></Svg>
      <Svg><path d="M3 4h7v10H3zM10 7h2v4" fill="none" stroke="#fff" strokeWidth="1.5" /></Svg>
      <Svg><path d="M2 12V9M5 12V7M8 12V5M11 12V3M14 12V1" stroke="#fff" strokeWidth="2" /></Svg>
      <Svg><path d="M2 5h3l4-4v12l-4-4H2z" fill="#fff" /></Svg>
    </div>
  );
}

function Taskbar() {
  return (
    <div className="relative flex h-[39px] shrink-0 items-center border-t border-[#33475e] bg-linear-to-r from-[#8697b0] from-4% via-[#a6c2df] via-7% to-[#a6c2df]">
      <div className="flex shrink-0 items-center">
        <button aria-label="Пуск" className="flex w-[54px] justify-center">
          <svg width="36" height="36" viewBox="0 0 36 36">
            <defs>
              <radialGradient id="orb" cx=".5" cy=".85" r=".9">
                <stop offset="0" stopColor="#3fc5ee" />
                <stop offset=".5" stopColor="#235f94" />
                <stop offset="1" stopColor="#b8cddc" />
              </radialGradient>
            </defs>
            <circle cx="18" cy="18" r="17" fill="url(#orb)" stroke="#4a6a8a" />
            <path d="M10 9q4-3 8-1l-2 8q-4-2-8 1z" fill="#f0652a" />
            <path d="M19 9q4 2 9 0l-2 8q-5 2-9 0z" fill="#8cc63c" />
            <path d="M8 18q4-3 8-1l-2 8q-4-2-8 1z" fill="#3a9ae0" />
            <path d="M17 18q4 2 8 0l-2 8q-4 2-8 0z" fill="#fcc82c" />
          </svg>
        </button>
        <button aria-label="Папка" className="flex w-[68px] justify-center pt-1"><Folder /></button>
        <button aria-label="Окна" className="flex w-[58px] justify-center"><Squares /></button>
        <button aria-label="Захват" className="flex w-[66px] justify-center">
          <svg width="32" height="32" viewBox="0 0 32 32">
            <path d="M1 4h7v14H2Q0 11 1 4z" fill="#a8a8a8" stroke="#333" strokeWidth=".7" />
            <path d="M8 5l5-3h9l6 3 1 8-4 5H13l-5-2z" fill="#f7c9a4" stroke="#5a3a22" />
            <path d="M20 6v8M24 6v8M12 12q4 3 8 2" fill="none" stroke="#a8704c" />
            <path d="M12 21h18l-9 10z" fill="#4cb6fc" stroke="#fff" strokeWidth=".8" />
          </svg>
        </button>
        <button aria-label="Память" className="flex w-[58px] justify-center">
          <svg width="30" height="30" viewBox="0 0 30 30">
            <rect x=".5" y=".5" width="29" height="29" fill="#fff" stroke="#3a72c4" />
            <rect x="1" y="1" width="28" height="4" fill="#3a72c4" />
            <path d="M2 13L11 8L27 14V18L5 19z" fill="#555" />
            <path d="M2 14l4 4h21v3H5z" fill="#222" />
            <path d="M4 20v7M8 20v7M12 20v7M16 19v7M20 19v7M24 18v7" stroke="#777" strokeWidth="2" />
          </svg>
        </button>
        <button aria-label="Сведения" className="flex w-[66px] justify-center">
          <svg width="30" height="30" viewBox="0 0 30 30">
            <circle cx="15" cy="15" r="14.5" fill="#55301c" />
            <circle cx="15" cy="15" r="12.5" fill="#f08c1c" stroke="#ffd24a" />
            <path d="M5 20q4-4 5-12M22 22q4-6 1-14" stroke="#e0601c" strokeWidth="2" fill="none" />
            <circle cx="15.5" cy="8" r="2.5" fill="#1a0c04" />
            <path d="M11 12h7v9h2v3h-9v-3h2v-6h-2z" fill="#1a0c04" />
          </svg>
        </button>
        <button aria-label="Почта" className="flex w-[58px] justify-center"><Cow /></button>
      </div>
      <div className="ml-[3px] flex h-full items-stretch gap-0.5">
        <button aria-label="Раскладка" className="flex w-[60px] items-center justify-center rounded-[3px] border border-[#53677f] bg-linear-to-br from-[#dce8f4] to-[#aac2da] pr-1"><LetterLogo size={30} /></button>
        <button aria-label="Проводник" className="flex w-[60px] items-center justify-center rounded-[3px] border border-[#53677f] bg-linear-to-br from-[#dce8f4] to-[#aac2da] pt-2"><Folder gear /></button>
        <button aria-label="Mozilla Firefox" className="flex w-[60px] items-center justify-center rounded-[3px] border border-[#53677f] bg-linear-to-br from-white to-[#d4dfee]"><FirefoxIcon size={32} /></button>
      </div>
      <div className="ml-auto flex h-full items-center bg-linear-to-r from-[#a6c2df] to-[#8596af] to-10% pl-[50px] text-[12px] text-white">
        <span className="w-5 pb-1">RU</span>
        <button aria-label="Скрытые значки" className="flex w-[33px] justify-center">
          <svg width="8" height="5" viewBox="0 0 8 5"><path d="M4 0l4 5H0z" fill="#eef2f8" /></svg>
        </button>
        <TrayIcons />
        <time className="ml-1.5 w-[78px] shrink-0 text-center text-[11px] leading-4">
          9:19<br />13.08.2012
        </time>
        <button aria-label="Показать рабочий стол" className="h-full w-3.5 border border-[#4a5a70] bg-linear-to-br from-[#8fa0b6] to-[#4c5d74]" />
      </div>
      <div className="absolute top-[7px] right-3.5 bg-[#ffff00] px-0.5 font-['Liberation_Sans'] text-[13px] leading-[17px] font-bold whitespace-nowrap text-black">
        Text example 13.08.12 (09:19:34)
      </div>
    </div>
  );
}

export default function App() {
  return (
    <div className="flex h-screen flex-col overflow-hidden bg-[#d7daee] font-['Noto_Sans',sans-serif] text-[#0c0c0c]">
      <TitleBar />
      <MenuBar />
      <NavBar />
      <RoboBar />
      <MailBar />
      <TabStrip />
      <div className="flex min-h-0 flex-1 overflow-hidden">
        <div className="w-[15px] shrink-0 bg-linear-to-b from-[#4a7cb4] via-[#4a82b4] via-20% to-[#5181b5] to-25%" />
        <div className="flex min-w-0 flex-1 justify-center bg-[#eee]">
          <ServicePage />
        </div>
        <div className="w-[15px] shrink-0 bg-linear-to-b from-[#4a7cb4] via-[#4a82b4] via-20% to-[#5181b5] to-25%" />
        <Scrollbar />
      </div>
      <StatusBar />
      <Taskbar />
    </div>
  );
}
